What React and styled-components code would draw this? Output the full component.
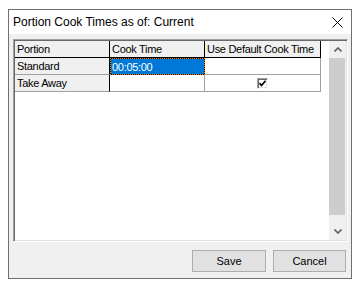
import React from 'react';
import styled, { createGlobalStyle } from 'styled-components';

const GlobalStyle = createGlobalStyle`
  body {
    margin: 0;
    background: #ffffff;
    font-family: 'Liberation Sans', Arial, sans-serif;
  }
`;

const Page = styled.div`
  padding: 9px 0 0 8px;
`;

const Window = styled.div`
  box-sizing: border-box;
  width: 344px;
  height: 270px;
  border: 1px solid #707070;
  background: #f0f0f0;
  display: flex;
  flex-direction: column;
`;

const TitleBar = styled.div`
  height: 24px;
  background: #ffffff;
  display: flex;
  align-items: center;
  justify-content: space-between;
  padding: 0 8px 0 4px;
  font-size: 12px;
  color: #000;
`;

const Body = styled.div`
  flex: 1;
  display: flex;
  flex-direction: column;
  padding: 5px 3px 6px 4px;
`;

const GridFrame = styled.div`
  box-sizing: border-box;
  height: 203px;
  background: #ffffff;
  border-style: solid;
  border-width: 1px;
  border-color: #a0a0a0 #ffffff #ffffff #a0a0a0;
  box-shadow: inset 1px 1px 0 #696969, inset -1px -1px 0 #e3e3e3;
  padding: 1px;
  display: flex;
`;

const Table = styled.div`
  display: grid;
  grid-template-columns: 95px 95px 116px;
  grid-auto-rows: 17px;
  align-content: start;
  font-size: 11px;
  letter-spacing: -0.3px;
`;

const Cell = styled.div`
  box-sizing: border-box;
  display: flex;
  align-items: center;
  justify-content: ${(p) => (p.$center ? 'center' : 'flex-start')};
  padding-left: 2px;
  background: ${(p) => (p.$fixed ? '#f0f0f0' : '#ffffff')};
  border-right: 1px solid ${(p) => (p.$fixed || p.$dark ? '#000000' : '#a0a0a0')};
  border-bottom: 1px solid ${(p) => (p.$header ? '#000000' : '#a0a0a0')};
  color: #000;
  white-space: nowrap;
  overflow: hidden;
`;

const SelectedCell = styled(Cell)`
  border: 1px dotted #ff8a00;
  background: linear-gradient(#0078d7, #0078d7) padding-box,
    linear-gradient(#000, #000) border-box;
  color: #ffffff;
  padding-left: 1px;
`;

const CheckBox = styled.span`
  box-sizing: border-box;
  width: 11px;
  height: 11px;
  margin-left: -2px;
  background: #ffffff;
  border-style: solid;
  border-width: 1px;
  border-color: #a0a0a0 #ffffff #ffffff #a0a0a0;
  box-shadow: inset 1px 1px 0 #696969, inset -1px -1px 0 #e3e3e3;
  display: flex;
  align-items: center;
  justify-content: center;
`;

const ScrollBar = styled.div`
  width: 17px;
  margin-left: auto;
  background: #f0f0f0;
  display: flex;
  flex-direction: column;
`;

const ArrowBox = styled.div`
  height: 17px;
  display: flex;
  align-items: center;
  justify-content: center;
`;

const Thumb = styled.div`
  flex: 1;
  margin: 0 1px 8px 0;
  background: #cdcdcd;
`;

const ButtonRow = styled.div`
  display: flex;
  justify-content: flex-end;
  gap: 7px;
  margin-top: 8px;
  padding-right: 2px;
`;

const Button = styled.button`
  box-sizing: border-box;
  width: ${(p) => p.$w}px;
  height: 22px;
  background: #e1e1e1;
  border: 1px solid #adadad;
  font-family: 'Liberation Sans', Arial, sans-serif;
  font-size: 11px;
  color: #000;
  padding: 0;
`;

const Chevron = ({ up }) => (
  <svg width="8" height="5" viewBox="0 0 8 5">
    <path
      d={up ? 'M0.5 4.5 L4 1 L7.5 4.5' : 'M0.5 0.5 L4 4 L7.5 0.5'}
      fill="none"
      stroke="#606060"
      strokeWidth="1.6"
    />
  </svg>
);

const rows = [
  { portion: 'Standard', time: '00:05:00', useDefault: false, selected: true },
  { portion: 'Take Away', time: '', useDefault: true, selected: false },
];

export default function App() {
  return (
    <>
      <GlobalStyle />
      <Page>
        <Window>
          <TitleBar>
            <span>Portion Cook Times as of: Current</span>
            <svg width="11" height="11" viewBox="0 0 11 11">
              <path d="M0.5 0.5 L10.5 10.5 M10.5 0.5 L0.5 10.5" stroke="#000" strokeWidth="1" />
            </svg>
          </TitleBar>
          <Body>
            <GridFrame>
              <Table>
                <Cell $fixed $header>Portion</Cell>
                <Cell $fixed $header>Cook Time</Cell>
                <Cell $fixed $header>Use Default Cook Time</Cell>
                {rows.map((r) => (
                  <React.Fragment key={r.portion}>
                    <Cell $fixed>{r.portion}</Cell>
                    {r.selected ? <SelectedCell>{r.time}</SelectedCell> : <Cell>{r.time}</Cell>}
                    <Cell $center>
                      {r.useDefault && (
                        <CheckBox>
                          <svg width="7" height="7" viewBox="0 0 7 7">
                            <path d="M0.5 3 L2.5 5.5 L6.5 0.8" fill="none" stroke="#000" strokeWidth="1.6" />
                          </svg>
                        </CheckBox>
                      )}
                    </Cell>
                  </React.Fragment>
                ))}
              </Table>
              <ScrollBar>
                <ArrowBox>
                  <Chevron up />
                </ArrowBox>
                <Thumb />
                <ArrowBox>
                  <Chevron />
                </ArrowBox>
              </ScrollBar>
            </GridFrame>
            <ButtonRow>
              <Button $w={74}>Save</Button>
              <Button $w={73}>Cancel</Button>
            </ButtonRow>
          </Body>
        </Window>
      </Page>
    </>
  );
}
